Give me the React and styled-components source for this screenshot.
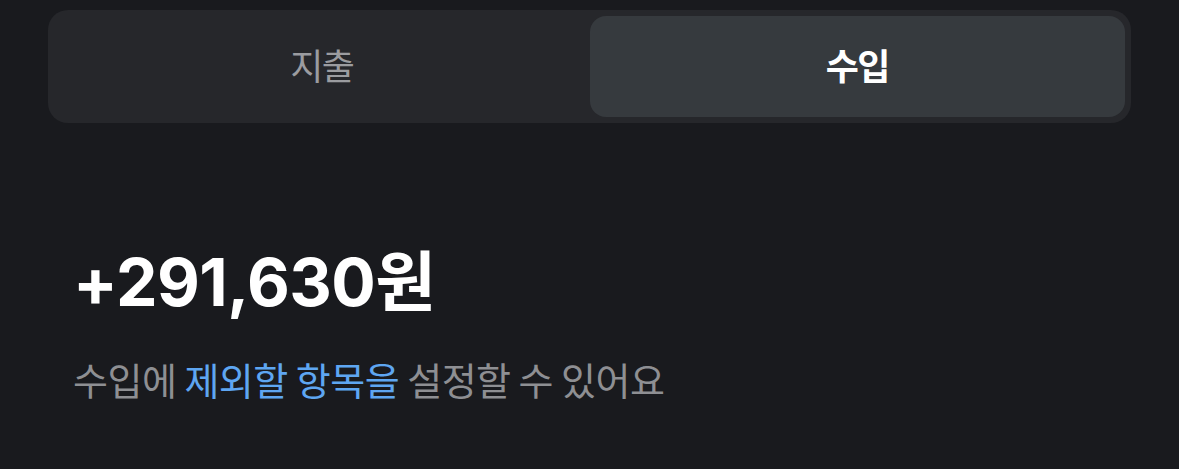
import React, { useState } from "react";
import styled, { createGlobalStyle } from "styled-components";

const GlobalStyle = createGlobalStyle`
  html, body {
    margin: 0;
    padding: 0;
    background: #191a1e;
  }
  body {
    font-family: "Inter", "Noto Sans CJK KR", sans-serif;
    -webkit-font-smoothing: antialiased;
  }
`;

const Page = styled.div`
  width: 1179px;
  height: 469px;
  box-sizing: border-box;
  padding: 10px 48px 0 48px;
  background: #191a1e;
  overflow: hidden;
`;

const Segment = styled.div`
  display: grid;
  grid-template-columns: 1fr 1fr;
  height: 113px;
  box-sizing: border-box;
  padding: 6px;
  border-radius: 20px;
  background: #26272b;
`;

const Tab = styled.button`
  border: none;
  border-radius: 16px;
  background: ${(p) => (p.$active ? "#363a3e" : "transparent")};
  color: ${(p) => (p.$active ? "#ffffff" : "#9b9ca0")};
  font-family: "Noto Sans CJK KR", sans-serif;
  font-size: 36px;
  font-weight: ${(p) => (p.$active ? 700 : 400)};
  letter-spacing: -1.5px;
  cursor: pointer;
  padding: 0 0 6px;
`;

const Summary = styled.section`
  display: flex;
  flex-direction: column;
  padding: 126px 0 0 25px;
`;

const Amount = styled.div`
  color: #ffffff;
  font-family: "Inter", "Noto Sans CJK KR", sans-serif;
  font-size: 66px;
  font-weight: 700;
  letter-spacing: -0.5px;
  line-height: 1;
`;

const Hint = styled.p`
  margin: 45px 0 0;
  color: #8e8f93;
  font-family: "Noto Sans CJK KR", sans-serif;
  font-size: 38px;
  letter-spacing: -0.5px;
  line-height: 1;
`;

const Link = styled.span`
  color: #5ea6f2;
`;

export default function App() {
  const [tab, setTab] = useState("income");

  return (
    <Page>
      <GlobalStyle />
      <Segment>
        <Tab $active={tab === "expense"} onClick={() => setTab("expense")}>
          지출
        </Tab>
        <Tab $active={tab === "income"} onClick={() => setTab("income")}>
          수입
        </Tab>
      </Segment>
      <Summary>
        <Amount>+291,630원</Amount>
        <Hint>
          수입에 <Link>제외할 항목을</Link> 설정할 수 있어요
        </Hint>
      </Summary>
    </Page>
  );
}
